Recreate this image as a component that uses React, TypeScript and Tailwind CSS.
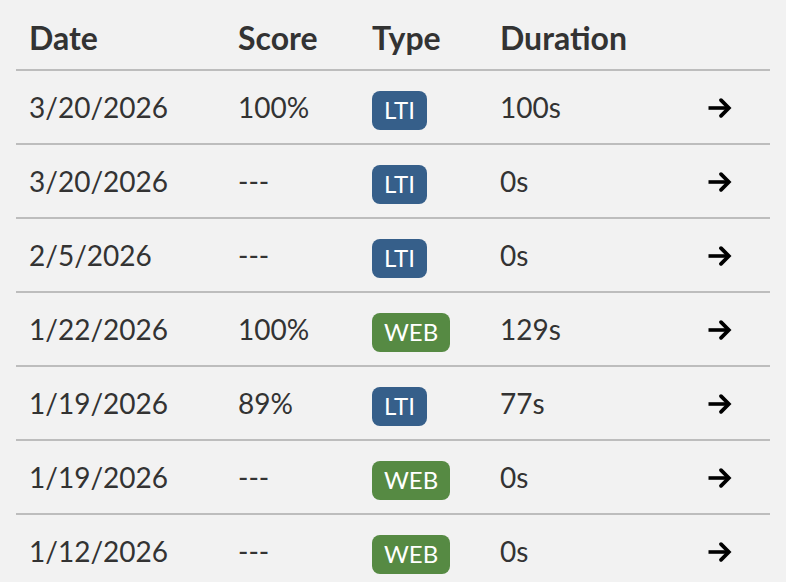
import React from 'react'

type Attempt = {
  date: string
  score: string
  type: 'LTI' | 'WEB'
  duration: string
}

const attempts: Attempt[] = [
  { date: '3/20/2026', score: '100%', type: 'LTI', duration: '100s' },
  { date: '3/20/2026', score: '---', type: 'LTI', duration: '0s' },
  { date: '2/5/2026', score: '---', type: 'LTI', duration: '0s' },
  { date: '1/22/2026', score: '100%', type: 'WEB', duration: '129s' },
  { date: '1/19/2026', score: '89%', type: 'LTI', duration: '77s' },
  { date: '1/19/2026', score: '---', type: 'WEB', duration: '0s' },
  { date: '1/12/2026', score: '---', type: 'WEB', duration: '0s' },
]

const cols = 'grid grid-cols-[209px_134px_128px_208px_1fr] pl-[13px]'

function TypeBadge({ type }: { type: Attempt['type'] }) {
  const color = type === 'LTI' ? 'bg-[#365f8a]' : 'bg-[#568a43]'
  return (
    <span
      className={`inline-flex h-[39px] items-center rounded-[8px] px-[12px] text-[24px] leading-none text-white ${color}`}
    >
      {type}
    </span>
  )
}

function ArrowIcon() {
  return (
    <svg className="w-[24px] h-[24px]" viewBox="0 0 24 24" fill="none" stroke="#000">
      <path d="M0.5 12H21" strokeWidth={3.6} />
      <path d="M13 4.2L20.8 12L13 19.8" strokeWidth={3.8} strokeLinecap="round" strokeLinejoin="miter" />
    </svg>
  )
}

export default function App() {
  return (
    <div className="min-h-screen bg-[#f2f2f2] px-[16px] text-[#333] font-['Lato','Liberation_Sans',sans-serif]">
      <div className={`${cols} items-end h-[71px] border-b-2 border-[#bdbdbd] pb-[15px] text-[32px] font-bold leading-none`}>
        <div>Date</div>
        <div>Score</div>
        <div>Type</div>
        <div>Duration</div>
        <div />
      </div>
      {attempts.map((a, i) => (
        <div key={i} className={`${cols} items-center h-[74px] border-b-2 border-[#bdbdbd] text-[28px]`}>
          <div>{a.date}</div>
          <div>{a.score}</div>
          <div className="pt-[3px]">
            <TypeBadge type={a.type} />
          </div>
          <div>{a.duration}</div>
          <div className="flex">
            <button className="pt-[1px]">
              <ArrowIcon />
            </button>
          </div>
        </div>
      ))}
    </div>
  )
}
